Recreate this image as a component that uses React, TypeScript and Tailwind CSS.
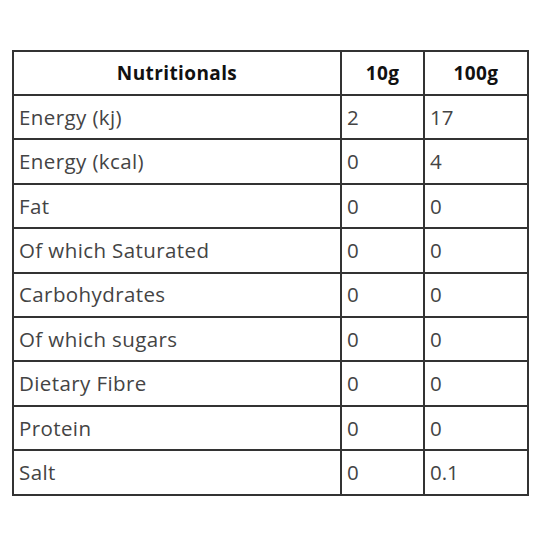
const rows: [string, string, string][] = [
  ['Energy (kj)', '2', '17'],
  ['Energy (kcal)', '0', '4'],
  ['Fat', '0', '0'],
  ['Of which Saturated', '0', '0'],
  ['Carbohydrates', '0', '0'],
  ['Of which sugars', '0', '0'],
  ['Dietary Fibre', '0', '0'],
  ['Protein', '0', '0'],
  ['Salt', '0', '0.1'],
]

export default function App() {
  return (
    <div className="w-[540px] h-[540px] bg-white pt-[50px] pl-[12px]" style={{ fontFamily: '"Open Sans", Lato, sans-serif' }}>
      <table className="border-collapse w-[515px] table-fixed">
        <colgroup>
          <col className="w-[328px]" />
          <col className="w-[83px]" />
          <col className="w-[104px]" />
        </colgroup>
        <thead>
          <tr className="h-[44px]">
            {['Nutritionals', '10g', '100g'].map((h) => (
              <th key={h} className="border-2 border-[#333] text-center text-[19px] font-bold text-[#111] tracking-[0.4px]">
                {h}
              </th>
            ))}
          </tr>
        </thead>
        <tbody>
          {rows.map(([name, a, b]) => (
            <tr key={name} className="h-[44.4px]">
              <td className="border-2 border-[#333] px-[5px] text-[20.5px] text-[#444] tracking-[0.4px]">{name}</td>
              <td className="border-2 border-[#333] px-[5px] text-[20.5px] text-[#444]">{a}</td>
              <td className="border-2 border-[#333] px-[5px] text-[20.5px] text-[#444]">{b}</td>
            </tr>
          ))}
        </tbody>
      </table>
    </div>
  )
}
